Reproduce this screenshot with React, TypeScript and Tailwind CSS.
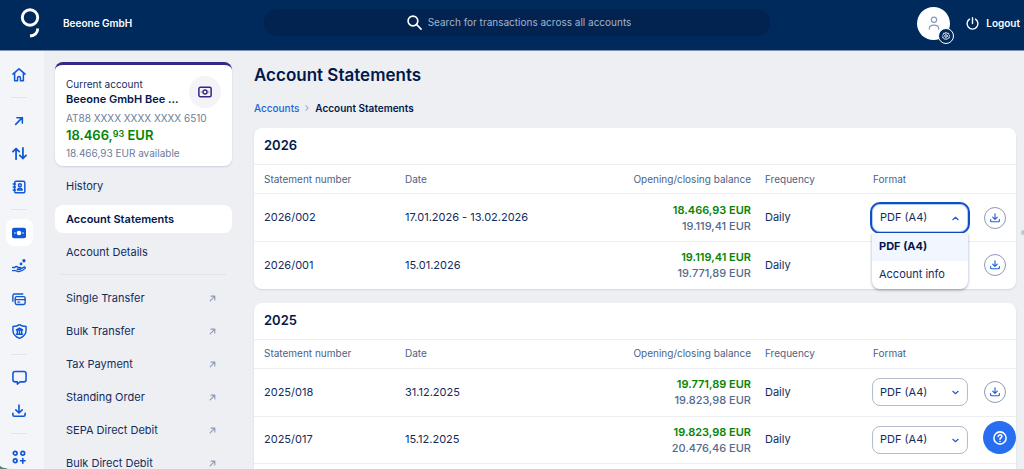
import React, { useState } from "react";

type IconProps = { className?: string };

const strokeProps = {
  fill: "none",
  stroke: "currentColor",
  strokeLinecap: "round" as const,
  strokeLinejoin: "round" as const,
  viewBox: "0 0 24 24",
  "aria-hidden": true,
};

const Home = ({ className }: IconProps) => (
  <svg {...strokeProps} strokeWidth={2.6} className={className}>
    <path d="M1.500 10.500 12 1.500l10.500 9M4.500 8.500v13.500h5V17a2.500 2.500 0 0 1 5 0v5h5V8.500" />
  </svg>
);
const ArrowUpRight = ({ className }: IconProps) => (
  <svg {...strokeProps} strokeWidth={3.8} className={className}>
    <path d="M4 20 20 4M7 4h13v13" />
  </svg>
);
const Swap = ({ className }: IconProps) => (
  <svg {...strokeProps} strokeWidth={2.8} className={className}>
    <path d="M6.500 21V4M1.500 9l5-5 5 5M17.500 3v17M12.500 15l5 5 5-5" />
  </svg>
);
const Contacts = ({ className }: IconProps) => (
  <svg {...strokeProps} strokeWidth={2.5} className={className}>
    <rect x="4.500" y="2" width="17.500" height="20" rx="2.500" />
    <path d="M2 7h4M2 12h4M2 17h4" />
    <circle cx="13.500" cy="9" r="2.500" />
    <path d="M9.500 17c.5-4 7.500-4 8 0z" />
  </svg>
);
const NoteSolid = ({ className }: IconProps) => (
  <svg viewBox="0 0 24 24" className={className} aria-hidden>
    <rect x="0" y="3" width="24" height="18" rx="3.500" fill="currentColor" />
    <circle cx="12" cy="12" r="4" fill="#fff" />
    <circle cx="5" cy="12" r="1.300" fill="#fff" />
    <circle cx="19" cy="12" r="1.300" fill="#fff" />
  </svg>
);
const NoteOutline = ({ className }: IconProps) => (
  <svg {...strokeProps} strokeWidth={2.6} className={className}>
    <rect x="1.500" y="4" width="21" height="16" rx="2.500" />
    <circle cx="12" cy="12" r="3.500" />
    <path strokeWidth={1.8} d="M5.500 12h.1M18.500 12h.1" />
  </svg>
);
const HandCoins = ({ className }: IconProps) => (
  <svg {...strokeProps} strokeWidth={2.4} className={className}>
    <path d="M1 14.500h3.500c2-2 4.500-1.500 6 0h3.500c2 0 2 3 0 3H9M15 17l5.500-3c2-.8 3 1 1.500 2.500-3 3-6 5-10 5-3 0-4-1.500-6.500-1.500H1" />
    <circle cx="15.500" cy="8.500" r="1.200" fill="currentColor" />
    <circle cx="20.500" cy="3" r="1.600" fill="currentColor" />
  </svg>
);
const Cards = ({ className }: IconProps) => (
  <svg {...strokeProps} strokeWidth={2.4} className={className}>
    <rect x="5.500" y="8" width="17" height="13.500" rx="2.500" />
    <path d="M5.500 13h17M10 17.300h3M1.500 16V6.500c0-2 1-3 3-3h14" />
  </svg>
);
const Shield = ({ className }: IconProps) => (
  <svg {...strokeProps} strokeWidth={2.3} className={className}>
    <path d="M12 1c3 2.500 6 3 10.500 3v6c0 7-4 10.500-10.500 13C5.500 20.500 1.500 17 1.500 10V4C6 4 9 3.500 12 1z" />
    <path d="M7 9.500 12 6.500l5 3zM8.500 10v6M12 10v6M15.500 10v6M7 16.500h10" />
  </svg>
);
const Chat = ({ className }: IconProps) => (
  <svg {...strokeProps} strokeWidth={2.5} className={className}>
    <path d="M5 2.500h14a3.500 3.500 0 0 1 3.500 3.500v9.500A3.500 3.500 0 0 1 19 19h-6l-4.500 3.500V19H5a3.500 3.500 0 0 1-3.500-3.500V6A3.500 3.500 0 0 1 5 2.500z" />
  </svg>
);
const Download = ({ className }: IconProps) => (
  <svg {...strokeProps} strokeWidth={2.8} className={className}>
    <path d="M12 2v13M6.500 10l5.500 5.500 5.500-5.500M1.500 16v2.500c0 1.700 1 2.500 2.500 2.500h16c1.500 0 2.500-.8 2.500-2.500V16" />
  </svg>
);
const Apps = ({ className }: IconProps) => (
  <svg {...strokeProps} strokeWidth={2.8} className={className}>
    <circle cx="5.500" cy="5.500" r="3.200" />
    <circle cx="18.500" cy="5.500" r="3.200" />
    <circle cx="5.500" cy="18.500" r="3.200" />
    <path d="M18.500 14.500v8M14.500 18.500h8" />
  </svg>
);
const Search = ({ className }: IconProps) => (
  <svg {...strokeProps} strokeWidth={2.6} className={className}>
    <circle cx="9.500" cy="9.500" r="7.800" />
    <path d="m15.500 15.500 7 7" />
  </svg>
);
const Power = ({ className }: IconProps) => (
  <svg {...strokeProps} strokeWidth={2.6} className={className}>
    <path d="M12 1.500V12M6.500 4a10 10 0 1 0 11 0" />
  </svg>
);
const Person = ({ className }: IconProps) => (
  <svg {...strokeProps} strokeWidth={2} className={className}>
    <circle cx="12" cy="6.500" r="4.500" />
    <path d="M4 22.500v-1c0-8 16-8 16 0v1" />
  </svg>
);
const Gear = ({ className }: IconProps) => (
  <svg {...strokeProps} strokeWidth={2.6} className={className}>
    <path d="m12 1.500 3 2.500 4-.5 1 4 3 2.500-1.500 3.500.5 4-4 1-2.500 3.500-3.500-1.500-4 1.500-2-3.500-4-1 .5-4L1 10.500 4 7.500l1-4 4 .5z" />
    <circle cx="12" cy="12" r="4" />
  </svg>
);
const Chevron = ({ className }: IconProps) => (
  <svg {...strokeProps} strokeWidth={4.4} className={className}>
    <path d="m3 8 9 8 9-8" />
  </svg>
);
const Help = ({ className }: IconProps) => (
  <svg {...strokeProps} strokeWidth={2.6} className={className}>
    <circle cx="12" cy="12" r="10.500" />
    <path d="M9 9.500c0-4 6.200-4 6.200 0 0 2.500-3.200 2.300-3.200 4.500M12 17.800v.1" />
  </svg>
);
const Logo = ({ className }: IconProps) => (
  <svg viewBox="0 0 20 30" fill="none" stroke="#fff" strokeWidth="2.900" className={className} aria-hidden>
    <circle cx="10" cy="9.500" r="7.700" />
    <path d="M17.700 20.500c0 4.500-3.200 7.200-7.700 7.500" />
  </svg>
);

const railGroups = [
  [{ label: "Home", Icon: Home, size: "size-[14px]" }],
  [
    { label: "Send", Icon: ArrowUpRight, size: "size-[10px]" },
    { label: "Transfers", Icon: Swap, size: "size-[15px]" },
    { label: "Contacts", Icon: Contacts, size: "size-[14px]" },
  ],
  [
    { label: "Accounts", Icon: NoteSolid, size: "size-[14px]", active: true },
    { label: "Loans", Icon: HandCoins, size: "size-[14px]" },
    { label: "Cards", Icon: Cards, size: "size-[14px]" },
    { label: "Insurance", Icon: Shield, size: "size-[15px]" },
  ],
  [
    { label: "Messages", Icon: Chat, size: "size-[15px]" },
    { label: "Downloads", Icon: Download, size: "size-[14px]" },
  ],
  [{ label: "Apps", Icon: Apps, size: "size-[14px]" }],
] as { label: string; Icon: React.FC<IconProps>; size: string; active?: boolean }[][];

const accountLinks = ["History", "Account Statements", "Account Details"];
const orderLinks = [
  "Single Transfer",
  "Bulk Transfer",
  "Tax Payment",
  "Standing Order",
  "SEPA Direct Debit",
  "Bulk Direct Debit",
];

type Row = { id: string; date: string; opening: string; closing: string };

const years: { year: string; rows: Row[]; more?: boolean }[] = [
  {
    year: "2026",
    rows: [
      { id: "2026/002", date: "17.01.2026 - 13.02.2026", opening: "18.466,93 EUR", closing: "19.119,41 EUR" },
      { id: "2026/001", date: "15.01.2026", opening: "19.119,41 EUR", closing: "19.771,89 EUR" },
    ],
  },
  {
    year: "2025",
    more: true,
    rows: [
      { id: "2025/018", date: "31.12.2025", opening: "19.771,89 EUR", closing: "19.823,98 EUR" },
      { id: "2025/017", date: "15.12.2025", opening: "19.823,98 EUR", closing: "20.476,46 EUR" },
    ],
  },
];

const formats = ["PDF (A4)", "Account info"];

function FormatField({ id, open, onClose }: { id: string; open: boolean; onClose: () => void }) {
  const [value, setValue] = useState(formats[0]);
  return (
    <div className="relative">
      <select
        aria-label={`Format of statement ${id}`}
        value={value}
        onChange={(e) => setValue(e.target.value)}
        className={
          open
            ? "block h-7 w-full appearance-none rounded-lg bg-white pl-2 text-[11px] text-[#132c60] inset-ring-1 inset-ring-[#b4cdfb] outline-2 outline-[#0d4fc4]"
            : "block h-7 w-full appearance-none rounded-lg border border-[#b3bccb] bg-white pl-[7px] text-[11px] text-[#132c60]"
        }
      >
        {formats.map((f) => (
          <option key={f}>{f}</option>
        ))}
      </select>
      <Chevron
        className={
          open
            ? "pointer-events-none absolute top-[11px] right-[9px] size-[7px] rotate-180 text-[#1c62dc]"
            : "pointer-events-none absolute top-[11px] right-[9px] size-[7px] text-[#1c62dc]"
        }
      />
      {open && (
        <ul
          role="listbox"
          aria-label="Formats"
          className="absolute inset-x-0 top-[29px] z-10 overflow-hidden rounded-b-lg bg-white text-[11px] shadow-[0_1px_3px_rgba(10,40,92,0.4)]"
        >
          {formats.map((f) => (
            <li
              key={f}
              role="option"
              aria-selected={f === value}
              onClick={() => {
                setValue(f);
                onClose();
              }}
              className={
                f === value
                  ? "flex h-7 items-center bg-[#f2f6fe] pl-[7px] font-bold text-[#02184b]"
                  : "flex h-7 items-center pl-[7px] text-[#132c60]"
              }
            >
              {f}
            </li>
          ))}
        </ul>
      )}
    </div>
  );
}

export default function App() {
  const [openRow, setOpenRow] = useState<string | null>("2026/002");
  return (
    <div className="bg-[#5d8072]">
      <div className="flex h-screen flex-col overflow-hidden rounded-bl-[14px_4px] bg-[#edeff3] font-['Inter',sans-serif] text-[11px] text-[#132c60]">
        <header className="flex h-[51px] shrink-0 items-center border-b border-[#7c92b5] bg-[#002a5c] text-white">
          <div className="flex w-[264px] shrink-0 items-center pb-1">
            <Logo className="ml-5 h-[30px] w-5" />
            <span className="ml-[23px] text-[10px] font-semibold">Beeone GmbH</span>
          </div>
          <label className="mb-[5px] flex h-[27px] flex-1 items-center justify-center gap-[6px] rounded-full bg-[#02224f] pl-1">
            <Search className="size-[15px]" />
            <input
              type="search"
              aria-label="Search"
              placeholder="Search for transactions across all accounts"
              className="field-sizing-content bg-transparent text-[10px] outline-none placeholder:text-[#a3b4cf]"
            />
          </label>
          <div className="flex w-[254px] shrink-0 items-center justify-end gap-4 pr-1 pb-1">
            <button
              aria-label="Profile"
              className="relative flex size-[33px] items-center justify-center rounded-full bg-white text-[#8c9bb8]"
            >
              <Person className="size-[14px]" />
              <span className="absolute -right-1 -bottom-1 flex size-4 items-center justify-center rounded-full border border-white bg-[#002a5c] text-white">
                <Gear className="size-[8px]" />
              </span>
            </button>
            <button className="flex items-center gap-[7px] text-[10px] font-semibold">
              <Power className="size-[13px]" />
              Logout
            </button>
          </div>
        </header>

        <div className="flex min-h-0 flex-1">
          <nav
            aria-label="Main"
            className="flex w-11 shrink-0 flex-col items-center bg-[#f4f5f8] pt-[10px] pr-[6px] text-[#0f58d6]"
          >
            {railGroups.map((group, i) => (
              <div key={i} className="flex flex-col items-center">
                {i > 0 && <div className="my-[9px] h-px w-4 bg-[#e2e5eb]" />}
                <div className="flex flex-col gap-[6px]">
                  {group.map(({ label, Icon, size, active }) => (
                    <a
                      key={label}
                      href="#"
                      aria-label={label}
                      className={
                        active
                          ? "flex size-[27px] items-center justify-center rounded-lg bg-white"
                          : "flex size-[27px] items-center justify-center rounded-lg"
                      }
                    >
                      <Icon className={size} />
                    </a>
                  ))}
                </div>
              </div>
            ))}
          </nav>

          <aside className="w-[210px] shrink-0 pt-[11px] pr-[22px] pl-[11px]">
            <section className="overflow-hidden rounded-lg border-t-3 border-[#33278a] bg-white px-[11px] pt-[11px] pb-[5px] shadow-[0_1px_2px_rgba(10,40,92,0.15)]">
              <div className="flex justify-between">
                <div className="pt-px">
                  <p className="text-[10px] leading-[15px]">Current account</p>
                  <h2 className="text-[11px] leading-[15px] font-semibold text-[#02184b]">Beeone GmbH Bee ...</h2>
                </div>
                <span className="flex size-8 shrink-0 items-center justify-center rounded-full bg-[#f4f4f8] text-[#33278a]">
                  <NoteOutline className="size-[14px]" />
                </span>
              </div>
              <p className="pt-[3px] text-[10px] leading-[15px] text-[#6b7d9b]">AT88 XXXX XXXX XXXX 6510</p>
              <p className="text-[13px] leading-[18px] font-semibold text-[#058505]">
                18.466,<span className="inline-block -translate-y-[3px] text-[9px]">93</span> EUR
              </p>
              <p className="text-[10px] leading-[15px] text-[#6b7d9b]">18.466,93 EUR available</p>
            </section>

            <nav aria-label="Account" className="mt-[6px] flex flex-col gap-[5px]">
              {accountLinks.map((l) => (
                <a
                  key={l}
                  href="#"
                  className={
                    l === "Account Statements"
                      ? "flex h-7 items-center rounded-lg bg-white px-[11px] font-semibold text-[#02184b]"
                      : "flex h-7 items-center rounded-lg px-[11px]"
                  }
                >
                  {l}
                </a>
              ))}
            </nav>
            <hr className="mx-[6px] mt-2 mb-[9px] border-[#e0e3ea]" />
            <nav aria-label="Orders" className="flex flex-col gap-[5px]">
              {orderLinks.map((l) => (
                <a key={l} href="#" className="flex h-7 items-center justify-between pr-4 pl-[11px]">
                  {l}
                  <ArrowUpRight className="size-[7px] text-[#8c9cb8]" />
                </a>
              ))}
            </nav>
          </aside>

          <main className="min-w-0 flex-1 pt-[13px]">
            <h1 className="text-[17px] leading-[22px] font-semibold text-[#02184b]">Account Statements</h1>
            <nav aria-label="Breadcrumb" className="mt-[14px] flex h-4 items-center text-[10px] font-medium">
              <a href="#" className="text-[#1c62dc]">
                Accounts
              </a>
              <Chevron className="mx-[5px] size-[6px] -rotate-90 text-[#9aa7bd]" />
              <span className="font-semibold text-[#02184b]">Account Statements</span>
            </nav>
            <div className="mt-3 flex flex-col gap-[14px]">
              {years.map(({ year, rows, more }) => (
                <section
                  key={year}
                  className={
                    more
                      ? "rounded-t-lg bg-white pb-8 shadow-[0_1px_2px_rgba(10,40,92,0.12)]"
                      : "rounded-lg bg-white shadow-[0_1px_2px_rgba(10,40,92,0.12)]"
                  }
                >
                  <h2 className="flex h-9 items-center pl-[10px] text-[13px] font-semibold text-[#02184b]">{year}</h2>
                  <table
                    className={
                      more
                        ? "w-full table-fixed border-collapse border-b border-[#eceef2]"
                        : "w-full table-fixed border-collapse"
                    }
                  >
                    <thead>
                      <tr className="h-[29px] border-y border-[#eceef2] text-left text-[10px] text-[#4c6285]">
                        <th className="w-[144px] pl-[10px] font-normal">Statement number</th>
                        <th className="px-[7px] font-normal">Date</th>
                        <th className="w-[180px] px-[7px] text-right font-normal">Opening/closing balance</th>
                        <th className="w-[108px] px-[7px] font-normal">Frequency</th>
                        <th className="w-[108px] px-[7px] font-normal">Format</th>
                        <th className="w-[42px]" aria-label="Download" />
                      </tr>
                    </thead>
                    <tbody>
                      {rows.map((r) => (
                        <tr key={r.id} className="h-12 border-b border-[#eceef2] last:h-[47px] last:border-b-0">
                          <td className="pl-[10px]">{r.id}</td>
                          <td className="px-[7px]">{r.date}</td>
                          <td className="px-[7px] text-right leading-[16px]">
                            <div className="font-semibold text-[#058505]">{r.opening}</div>
                            <div className="font-medium text-[#546a8c]">{r.closing}</div>
                          </td>
                          <td className="px-[7px]">Daily</td>
                          <td className="px-[6px]">
                            <FormatField id={r.id} open={openRow === r.id} onClose={() => setOpenRow(null)} />
                          </td>
                          <td className="pl-[10px]">
                            <button
                              aria-label={`Download statement ${r.id}`}
                              className="flex size-[22px] items-center justify-center rounded-full border border-[#8c9bb8] text-[#1c62dc]"
                            >
                              <Download className="size-[10px]" />
                            </button>
                          </td>
                        </tr>
                      ))}
                    </tbody>
                  </table>
                </section>
              ))}
            </div>
          </main>
          <div className="flex w-2 shrink-0 justify-end overflow-hidden pt-[179px]">
            <span className="h-[5px] w-[3px] rounded-l-full bg-[#c3c7d0]" />
          </div>
        </div>

        <button
          aria-label="Help"
          className="fixed right-2 bottom-[15px] flex size-[33px] items-center justify-center rounded-full bg-[#276ef1] text-white"
        >
          <Help className="size-[14px]" />
        </button>
      </div>
    </div>
  );
}
